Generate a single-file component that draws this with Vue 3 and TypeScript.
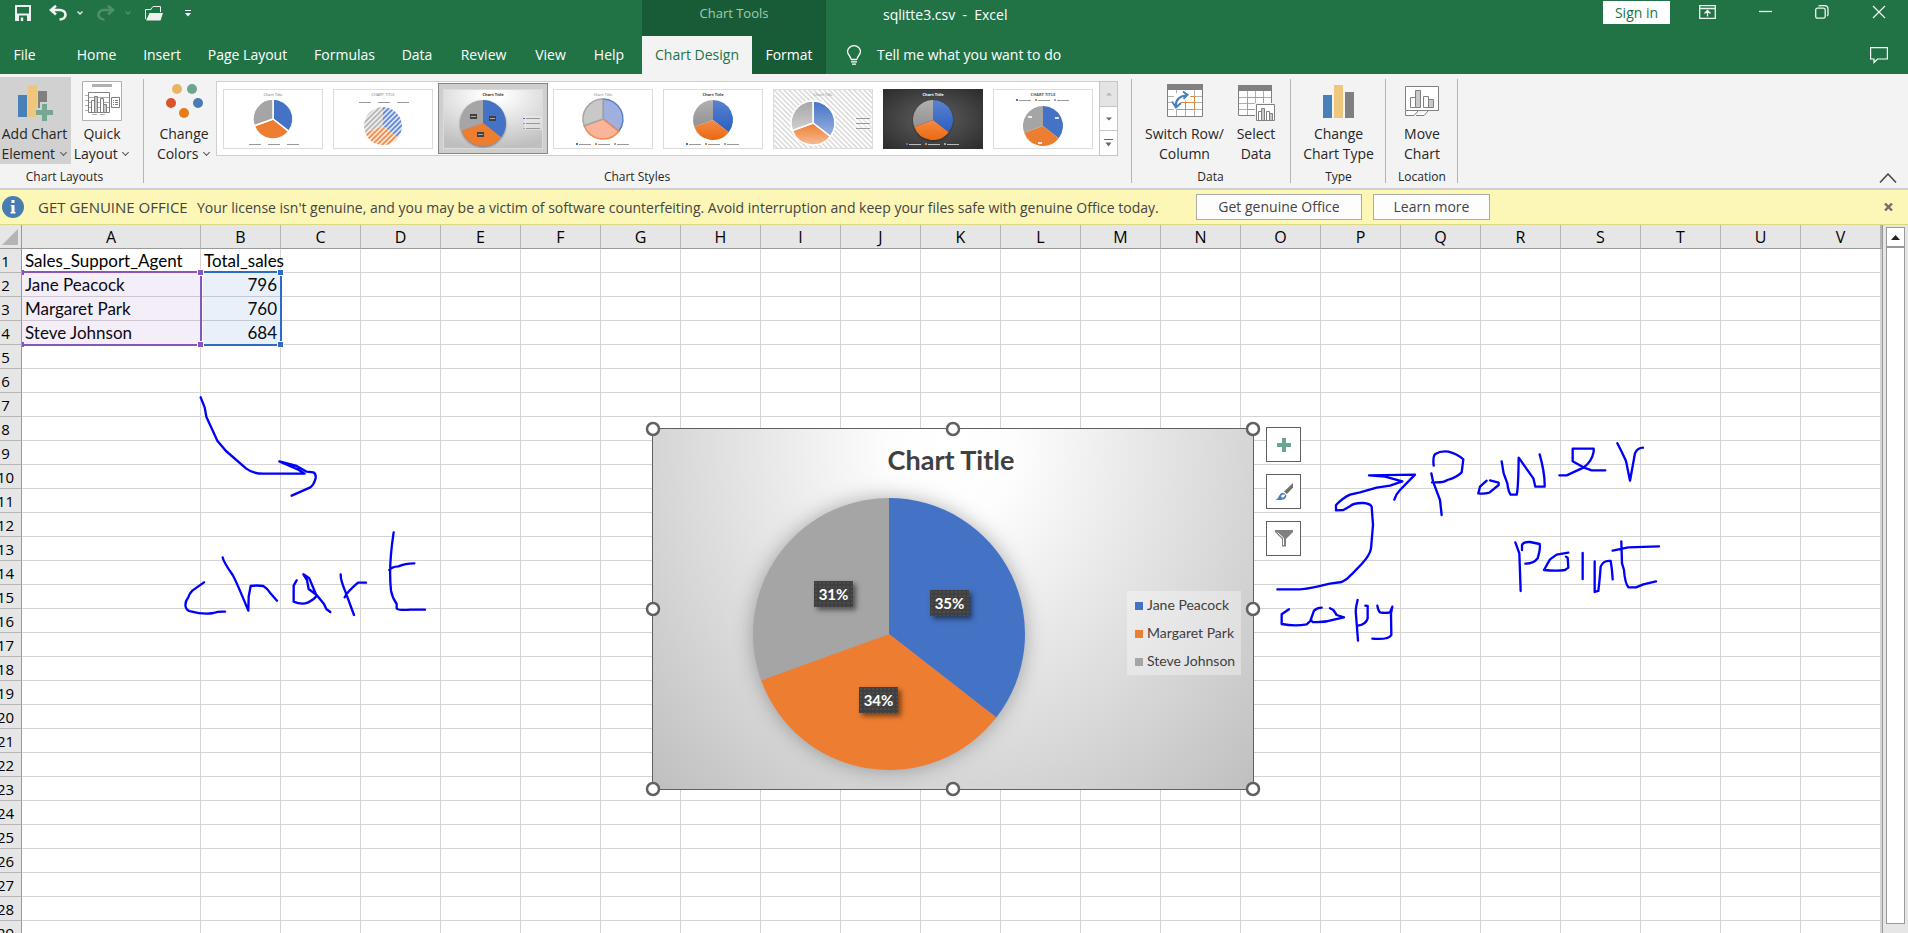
<script setup lang="ts">
interface Thumb {
  id: number
  bg: 'white' | 'radial' | 'dark' | 'hatch'
  title: string
  titleX: number
  titleFill: string
  titleBold: boolean
  cx: number
  cy: number
  r: number
  fills: [string, string, string]
  strokes?: [string, string, string]
  gap?: string
  legend: 'bottom' | 'top' | 'right'
  legendY: number
  colored: boolean
  labels?: 'dark' | 'light'
}

interface Slice {
  name: string
  value: number
  percent: string
  color: string
}

const slices: Slice[] = [
  { name: 'Jane Peacock', value: 796, percent: '35%', color: '#4472c4' },
  { name: 'Margaret Park', value: 760, percent: '34%', color: '#ed7d31' },
  { name: 'Steve Johnson', value: 684, percent: '31%', color: '#a5a5a5' },
]

function sectors(cx: number, cy: number, r: number): string[] {
  const total = slices.reduce((sum, s) => sum + s.value, 0)
  let angle = 0
  return slices.map((s) => {
    const next = angle + (s.value / total) * Math.PI * 2
    const x1 = cx + r * Math.sin(angle)
    const y1 = cy - r * Math.cos(angle)
    const x2 = cx + r * Math.sin(next)
    const y2 = cy - r * Math.cos(next)
    angle = next
    return `M${cx} ${cy}L${x1} ${y1}A${r} ${r} 0 0 1 ${x2} ${y2}Z`
  })
}

const pie = sectors(236, 205, 136)
const solid: [string, string, string] = ['#4472c4', '#ed7d31', '#a5a5a5']
const glossy: [string, string, string] = ['url(#gBlue)', 'url(#gOrange)', 'url(#gGrey)']

const thumbs: Thumb[] = [
  { id: 1, bg: 'white', title: 'Chart Title', titleX: 50, titleFill: '#666', titleBold: false, cx: 50, cy: 30, r: 20, fills: solid, gap: '#fff', legend: 'bottom', legendY: 55, colored: false },
  { id: 2, bg: 'white', title: 'CHART TITLE', titleX: 50, titleFill: '#777', titleBold: false, cx: 50, cy: 37, r: 19, fills: ['url(#hBlue)', 'url(#hOrange)', 'url(#hGrey)'], legend: 'top', legendY: 13, colored: false },
  { id: 3, bg: 'radial', title: 'Chart Title', titleX: 50, titleFill: '#333', titleBold: true, cx: 40, cy: 34, r: 23, fills: solid, legend: 'right', legendY: 29, colored: true, labels: 'dark' },
  { id: 4, bg: 'white', title: 'Chart Title', titleX: 50, titleFill: '#777', titleBold: false, cx: 50, cy: 30, r: 20, fills: ['#9fb0de', '#f9b49a', '#c8c8c8'], strokes: ['#5b7fce', '#f0894d', '#a5a5a5'], legend: 'bottom', legendY: 55, colored: true },
  { id: 5, bg: 'white', title: 'Chart Title', titleX: 50, titleFill: '#33405a', titleBold: true, cx: 50, cy: 31, r: 20, fills: glossy, legend: 'bottom', legendY: 55, colored: true },
  { id: 6, bg: 'hatch', title: 'Chart Title', titleX: 50, titleFill: '#888', titleBold: false, cx: 40, cy: 34, r: 22, fills: ['url(#fBlue)', 'url(#fOrange)', 'url(#fGrey)'], gap: '#fff', legend: 'right', legendY: 29, colored: false },
  { id: 7, bg: 'dark', title: 'Chart Title', titleX: 50, titleFill: '#fff', titleBold: true, cx: 50, cy: 31, r: 20, fills: glossy, legend: 'bottom', legendY: 55, colored: true },
  { id: 8, bg: 'white', title: 'CHART TITLE', titleX: 50, titleFill: '#555', titleBold: true, cx: 50, cy: 37, r: 20, fills: solid, legend: 'top', legendY: 11, colored: true, labels: 'light' },
]

function thumbBg(t: Thumb): string {
  if (t.bg === 'radial') return 'url(#bgRadial)'
  if (t.bg === 'dark') return 'url(#bgDark)'
  if (t.bg === 'hatch') return 'url(#bgHatch)'
  return '#fff'
}

const tabs = ['File', 'Home', 'Insert', 'Page Layout', 'Formulas', 'Data', 'Review', 'View', 'Help']
const columns = 'ABCDEFGHIJKLMNOPQRSTUV'.split('')
const cells: Record<string, string> = {
  A1: 'Sales_Support_Agent', B1: 'Total_sales',
  A2: 'Jane Peacock', B2: '796',
  A3: 'Margaret Park', B3: '760',
  A4: 'Steve Johnson', B4: '684',
}
const isNumber = (v?: string) => !!v && /^\d+$/.test(v)

const handles = [
  [0, 0], [300, 0], [600, 0],
  [0, 180], [600, 180],
  [0, 360], [300, 360], [600, 360],
]
</script>

<template>
  <div class="app">
    <header class="titlebar">
      <div class="left">
        <div class="qat">
          <button class="icon save" aria-label="Save">
            <svg width="16" height="16" viewBox="0 0 16 16"><path fill="#f0f0f0" fill-rule="evenodd" d="M0 0h16v16H0zM2 2v6.500h12V2zM4 10.500V16h1.800v-3.500h2.400V16H12v-5.500z" /></svg>
          </button>
          <button class="icon undo" aria-label="Undo">
            <svg width="18" height="16" viewBox="0 0 18 16" fill="none" stroke="#f4f4f4" stroke-width="2.600"><path d="M7 .8 2 5l5 4.400M2.500 5H11c3 0 5.500 1.800 5.500 4.800S14 14.500 10.500 14.500" /></svg>
          </button>
          <button class="icon caret" aria-label="Undo history">
            <svg width="6" height="4" viewBox="0 0 6 4" fill="none" stroke="#e8f0eb" stroke-width="1.300"><path d="M.5.5 3 3 5.500.5" /></svg>
          </button>
          <button class="icon redo" aria-label="Redo">
            <svg width="18" height="16" viewBox="0 0 18 16" fill="none" stroke="#4f9069" stroke-width="2.600"><path d="M11 .8 16 5l-5 4.400M15.500 5H7C4 5 1.500 6.800 1.500 9.800S4 14.500 7.500 14.500" /></svg>
          </button>
          <button class="icon caret" aria-label="Redo history">
            <svg width="6" height="4" viewBox="0 0 6 4" fill="none" stroke="#4f9069" stroke-width="1.300"><path d="M.5.5 3 3 5.500.5" /></svg>
          </button>
          <button class="icon open" aria-label="Open">
            <svg width="18" height="15" viewBox="0 0 18 15"><path fill="none" stroke="#f0f0f0" d="M.5 13V3.500h5.500V3l2-2.500h7.500V6" /><path fill="#f0f0f0" d="M1 14.500 4.500 7h13.500l-2.500 7.500z" /></svg>
          </button>
          <button class="icon more" aria-label="Customize Quick Access Toolbar">
            <svg width="6" height="7" viewBox="0 0 6 7"><path fill="#fff" d="M0 0h6v1H0zM0 3h6L3 6.500z" /></svg>
          </button>
        </div>
        <nav class="tabs">
          <button v-for="tab in tabs" :key="tab" class="tab">{{ tab }}</button>
        </nav>
      </div>
      <div class="context">
        <div class="context-title">Chart Tools</div>
        <div class="context-tabs">
          <button class="tab active">Chart Design</button>
          <button class="tab">Format</button>
        </div>
      </div>
      <div class="right">
        <div class="window-row">
          <div class="doc-title">sqlitte3.csv&nbsp; -&nbsp; Excel</div>
          <div class="window-controls">
            <button class="signin">Sign in</button>
            <button class="icon" aria-label="Ribbon Display Options">
              <svg width="17" height="14" viewBox="0 0 17 14" fill="none" stroke="#eef5f0" stroke-width="1.300"><path d="M.7.7h15.600v12.600H.7zM.7 3.500h15.600M8.500 11.500V6M5.500 8.500l3-3 3 3" /></svg>
            </button>
            <button class="icon" aria-label="Minimize">
              <svg width="13" height="14" viewBox="0 0 13 14"><path stroke="#eef5f0" stroke-width="1.300" d="M0 6.500h13" /></svg>
            </button>
            <button class="icon" aria-label="Restore Down">
              <svg width="14" height="14" viewBox="0 0 14 14" fill="none" stroke="#eef5f0" stroke-width="1.300"><rect x=".7" y="3.200" width="9.500" height="10" rx="1.800" /><path d="M3.500 1.200Q4.500.7 5.500.7h4Q13 .7 13 4.200v5q0 1-.7 1.800" /></svg>
            </button>
            <button class="icon" aria-label="Close">
              <svg width="14" height="14" viewBox="0 0 14 14"><path stroke="#eef5f0" stroke-width="1.300" d="m1 1 12 12M13 1 1 13" /></svg>
            </button>
          </div>
        </div>
        <div class="tell-row">
          <button class="tell">
            <svg width="16" height="20" viewBox="0 0 16 20" fill="none" stroke="#fff" stroke-width="1.300"><path d="M5 14.500C5 11 1.500 10 1.500 6.500a6.500 5.800 0 0 1 13 0C14.500 10 11 11 11 14.500M5 14.500h6M5 16.800h6M6 19.200h4" /></svg>
            <span>Tell me what you want to do</span>
          </button>
          <button class="icon comment" aria-label="Comments">
            <svg width="18" height="17" viewBox="0 0 18 17" fill="none" stroke="#fff" stroke-width="1.200"><path d="M.6.6h16.800v11.400H7.500L4 15.500V12H.6z" /></svg>
          </button>
        </div>
      </div>
    </header>

    <section class="ribbon">
      <div class="group layouts">
        <div class="group-body">
          <button class="big pressed">
            <svg width="36" height="40" viewBox="0 0 36 40"><path fill="#4a80b8" d="M1 14h9v22H1z" /><path fill="#eec77c" d="M11 4h9v32h-9z" /><path fill="#808080" d="M21 10h9v18h-9z" /><path fill="#d1d1d1" d="M23 21h9v5h5v8h-5v6h-7v-5h-6v-8h4z" /><path fill="#74a892" d="M25 23h5v6h6v5h-6v6h-5v-6h-6v-5h6z" /></svg>
            <span>Add Chart</span>
            <span>Element <i class="chev"></i></span>
          </button>
          <button class="big quick">
            <svg width="40" height="40" viewBox="0 0 40 40" fill="none"><path fill="#fff" stroke="#b0b0b0" d="M.5.500h39v39H.5z" /><path fill="#b0b0b0" d="M10 3h20v3H10z" /><path stroke="#b0b0b0" d="M3 14.500h3M3 19.500h3M3 24.500h3M3 29.500h3M10 33.500h5M18 33.500h5M7 16.500h20M7 21.500h20M7 26.500h20" /><path stroke="#808080" d="M6.500 11.500h21v20h-21z" /><path fill="#fff" stroke="#808080" d="M9.500 19.500h3v12h-3zM18.500 17.500h3v14h-3z" /><path fill="#c8c8c8" stroke="#808080" d="M12.500 15.500h3v16h-3zM21.500 23.500h3v8h-3z" /><path fill="#fff" stroke="#808080" d="M29.500 16.500h8v10h-8z" /><path stroke="#808080" d="M31 19.500h1M33 19.500h3M31 21.500h1M33 21.500h3M31 23.500h1M33 23.500h3" /></svg>
            <span>Quick</span>
            <span>Layout <i class="chev"></i></span>
          </button>
        </div>
        <div class="group-label">Chart Layouts</div>
      </div>

      <div class="group styles">
        <div class="group-body">
          <button class="big colors">
            <svg width="40" height="40" viewBox="0 0 40 40"><circle cx="13" cy="8" r="5" fill="#eab563" /><circle cx="28" cy="8" r="5" fill="#6aa590" /><circle cx="7" cy="22" r="5" fill="#d9532f" /><circle cx="34" cy="22" r="5" fill="#487db4" /><circle cx="20" cy="32" r="5" fill="#e67a1c" /></svg>
            <span>Change</span>
            <span>Colors <i class="chev"></i></span>
          </button>
          <div class="gallery">
            <button v-for="t in thumbs" :key="t.id" class="thumb" :class="{ selected: t.id === 3 }" :aria-label="'Style ' + t.id">
              <svg width="100" height="60" viewBox="0 0 100 60">
                <rect x="0.5" y="0.5" width="99" height="59" :fill="thumbBg(t)" :stroke="t.bg === 'dark' ? '#333' : '#dcdcdc'" />
                <text :x="t.titleX" y="7" text-anchor="middle" class="thumb-title" :fill="t.titleFill" :font-weight="t.titleBold ? 700 : 400">{{ t.title }}</text>
                <g :stroke="t.gap || 'none'" stroke-width="1.500" :class="{ glow: t.bg === 'radial' || t.bg === 'dark' }">
                  <path v-for="(d, i) in sectors(t.cx, t.cy, t.r)" :key="i" :d="d" :fill="t.fills[i]" :stroke="t.strokes ? t.strokes[i] : undefined" />
                </g>
                <g v-if="t.labels === 'dark'" fill="#404040"><path d="M27 25h7v5h-7zM46 27h7v5h-7zM34 43h7v5h-7z" /><path fill="#aaa" d="M28 27h5v1h-5zM47 29h5v1h-5zM35 45h5v1h-5z" /></g>
                <g v-if="t.labels === 'light'" fill="#fff" opacity=".8"><path d="M35 27h4v2h-4zM62 28h4v2h-4zM45 53h4v2h-4z" /></g>
                <g v-if="t.legend !== 'right'" :fill="t.bg === 'dark' ? '#bbb' : '#999'">
                  <rect v-for="i in 3" :key="i" :x="7 + i * 19" :y="t.legendY" width="12" height="1" />
                  <template v-if="t.colored"><rect v-for="(c, i) in solid" :key="c" :x="23 + i * 19" :y="t.legendY - 1" width="2" height="2" :fill="c" /></template>
                </g>
                <g v-else fill="#999">
                  <rect x="81" y="27" width="18" height="14" fill="#fff" fill-opacity=".3" />
                  <rect v-for="i in 3" :key="i" x="83" :y="t.legendY - 5 + i * 5" width="14" height="1" />
                  <template v-if="t.colored"><rect v-for="(c, i) in solid" :key="c" x="80" :y="t.legendY + i * 5" width="2" height="1" :fill="c" /></template>
                </g>
              </svg>
            </button>
            <div class="gallery-scroll">
              <button class="off" aria-label="Previous row"><svg width="6" height="4" viewBox="0 0 6 4"><path fill="#b5b5b5" d="M0 3.500h6L3 .5z" /></svg></button>
              <button aria-label="Next row"><svg width="6" height="4" viewBox="0 0 6 4"><path fill="#666" d="M0 .5h6L3 3.500z" /></svg></button>
              <button aria-label="More styles"><svg width="9" height="8" viewBox="0 0 9 8"><path fill="#666" d="M0 0h9v1H0zM1.500 3.500h6l-3 4z" /></svg></button>
            </div>
          </div>
        </div>
        <div class="group-label styles-label">Chart Styles</div>
      </div>

      <div class="group data">
        <div class="group-body">
          <button class="big switch">
            <svg width="38" height="40" viewBox="0 0 38 40" fill="none"><path fill="#fff" d="M1 4h36v31H1z" /><path stroke="#b0b0b0" d="M1 15.500h36M1 21.500h36M1 28.500h36M10.500 9v26M19.500 9v26M28.500 9v26" /><path stroke="#808080" d="M1.500 5v30.500h35V5" /><path fill="#808080" d="M1 3h36v6H1z" /><path stroke="#e58a3c" d="M10.500 15.500h18v13h-18zM10.500 21.500h18M19.500 15.500v13" /><path fill="#fff" d="M6 20l3-7 5-3 8-.5 3 5-4 5-6 1-1 5-5 4-5-5z" /><path stroke="#4a80b8" stroke-width="2" d="M10 25q-1-9 11-11M17 10.500l4.500 3.300-4 4M6 20.500l4 6 5-4.500" /></svg>
            <span>Switch Row/</span><span>Column</span>
          </button>
          <button class="big select">
            <svg width="38" height="40" viewBox="0 0 38 40" fill="none"><path fill="#fff" d="M1 4h33v31H1z" /><path stroke="#b0b0b0" d="M1 16.500h33M1 22.500h33M1 28.500h33M10.500 10v24M18.500 10v24M26.500 10v24" /><path stroke="#808080" d="M1.500 5v29.500h33V5" /><path fill="#808080" d="M1 4h34v6H1z" /><path stroke="#e58a3c" d="M10.500 16.500h16v12h-16z" /><path fill="#f3f3f3" d="M18 22h20v18H18z" /><path fill="#fff" stroke="#808080" d="M19.500 23.500h18v16h-18zM21.500 30.500h3v9h-3zM29.500 30.500h3v9h-3z" /><path fill="#c8c8c8" stroke="#808080" d="M24.500 27.500h3v12h-3zM32.500 32.500h3v7h-3z" /></svg>
            <span>Select</span><span>Data</span>
          </button>
        </div>
        <div class="group-label">Data</div>
      </div>

      <div class="group type">
        <div class="group-body">
          <button class="big">
            <svg width="32" height="40" viewBox="0 0 32 40"><path fill="#4a80b8" d="M0 14h9v23H0z" /><path fill="#eec77c" d="M11 4h9v33h-9z" /><path fill="#808080" d="M22 11h9v26h-9z" /></svg>
            <span>Change</span><span>Chart Type</span>
          </button>
        </div>
        <div class="group-label">Type</div>
      </div>

      <div class="group location">
        <div class="group-body">
          <button class="big">
            <svg width="34" height="40" viewBox="0 0 34 40" fill="none" stroke="#808080"><path fill="#fff" d="M.5 5.500h33v24H.5zM5.500 16.500h5v10h-5zM18.500 15.500h5v11h-5z" /><path fill="#c8c8c8" d="M10.500 9.500h5v17h-5zM23.500 18.500h5v8h-5z" /><path fill="#fff" d="M.5 30v4.500h8.500l4-4.500M11 34.500h8l4-4.500" /></svg>
            <span>Move</span><span>Chart</span>
          </button>
        </div>
        <div class="group-label">Location</div>
      </div>

      <button class="icon collapse" aria-label="Collapse the Ribbon">
        <svg width="18" height="10" viewBox="0 0 18 10" fill="none" stroke="#444" stroke-width="1.500"><path d="m1 9.500 8-8.500 8 8.500" /></svg>
      </button>
    </section>

    <section class="notice">
      <svg width="22" height="22" viewBox="0 0 22 22"><circle cx="11" cy="11" r="11" fill="#487db4" /><path fill="#fff" d="M9.500 4h3v3h-3zM9 9h3.500v8H9.500v-7H8.500zM8.500 16h5v1.500h-5z" /></svg>
      <span class="notice-title">GET GENUINE OFFICE</span>
      <span class="notice-text">Your license isn't genuine, and you may be a victim of software counterfeiting. Avoid interruption and keep your files safe with genuine Office today.</span>
      <button class="notice-btn genuine">Get genuine Office</button>
      <button class="notice-btn learn">Learn more</button>
      <button class="icon notice-close" aria-label="Close message">
        <svg width="9" height="8" viewBox="0 0 9 8"><path stroke="#707070" stroke-width="2.400" d="m1 .5 7 7M8 .5l-7 7" /></svg>
      </button>
    </section>

    <main class="sheet">
      <div class="grid">
        <table>
          <colgroup>
            <col class="c-row" /><col class="c-a" /><col v-for="n in 21" :key="n" class="c-std" /><col />
          </colgroup>
          <thead>
            <tr>
              <th class="corner" aria-label="Select all"><svg width="16" height="16" viewBox="0 0 16 16"><path fill="#b4b4b4" d="M16 0v16H0z" /></svg></th>
              <th v-for="c in columns" :key="c" scope="col">{{ c }}</th>
              <th></th>
            </tr>
          </thead>
          <tbody>
            <tr v-for="r in 29" :key="r">
              <th scope="row">{{ r }}</th>
              <td v-for="c in columns" :key="c" :class="{ num: isNumber(cells[c + r]) }">{{ cells[c + r] }}</td>
              <td></td>
            </tr>
          </tbody>
        </table>

        <svg class="ranges" width="290" height="130" viewBox="0 225 290 130">
          <path fill="#8656bb" fill-opacity=".1" d="M22 273h179v71H22z" />
          <path fill="#2e6bc8" fill-opacity=".1" d="M203 273h78v71h-78z" />
          <path fill="none" stroke="#2e6bc8" stroke-width="2" d="M201 272h80v73h-80" />
          <path fill="none" stroke="#8656bb" stroke-width="2" d="M22 272h179v73H22" />
          <g fill="#8656bb" stroke="#fff"><path d="M197.500 269.500h6v6h-6zM197.500 341.500h6v6h-6z" /></g>
          <g fill="#2e6bc8" stroke="#fff"><path d="M277.500 269.500h6v6h-6zM277.500 341.500h6v6h-6z" /></g>
          <path fill="#8656bb" d="M22 270h2v5h-2zM22 342h2v5h-2z" />
        </svg>

        <figure class="chart">
          <figcaption>Chart Title</figcaption>
          <svg class="pie" width="600" height="360" viewBox="0 0 600 360">
            <path v-for="(d, i) in pie" :key="i" :d="d" :fill="slices[i].color" />
          </svg>
          <span class="pct p1">{{ slices[0].percent }}</span>
          <span class="pct p2">{{ slices[1].percent }}</span>
          <span class="pct p3">{{ slices[2].percent }}</span>
          <ul class="legend">
            <li v-for="s in slices" :key="s.name"><i :style="{ background: s.color }"></i>{{ s.name }}</li>
          </ul>
          <svg class="handles" width="620" height="380" viewBox="-10 -10 620 380">
            <circle v-for="(h, i) in handles" :key="i" :cx="h[0]" :cy="h[1]" r="6" fill="#fff" stroke="#606060" stroke-width="2.500" />
          </svg>
          <div class="chart-tools">
            <button aria-label="Chart Elements"><svg width="14" height="14" viewBox="0 0 14 14"><path fill="#6aa590" d="M5 0h4v5h5v4H9v5H5V9H0V5h5z" /></svg></button>
            <button aria-label="Chart Styles"><svg width="18" height="18" viewBox="0 0 18 18"><path fill="#707070" d="M18 0v4.500l-6 6.500-3-2.500z" /><path fill="#4a80b8" d="M0 17q3-1 4-4 2-4 5-3l2.500 2.500Q11 17 5 17z" /><path fill="#fff" d="M6 13q1-2 3-1.500t0 2.500-3-1z" /></svg></button>
            <button aria-label="Chart Filters"><svg width="18" height="17" viewBox="0 0 18 17"><path fill="#808080" d="M0 0h18v2l-7 7v7.500H7V9L0 2z" /><path stroke="#fff" fill="none" d="M2.500 2.500 8.500 8v7" /></svg></button>
          </div>
        </figure>

        <svg class="ink" width="1886" height="708" viewBox="0 225 1886 708" aria-hidden="true">
          <g transform="translate(0 220) scale(.33333)">
            <path d="M602 532 614 562 619 590 652 662 678 693 738 745Q758 761 790 761H914L893 748 838 724 890 738 920 755 940 757Q948 760 947 773 943 793 931 802L875 827" />
            <path d="M612 1087 577 1112Q567 1122 565 1132 554 1146 557 1160 560 1172 572 1174 612 1185 640 1179 655 1174 675 1175M668 1012Q670 1025 698 1065 708 1082 745 1172L746 1130 752 1098Q770 1095 790 1098 800 1104 810 1118L831 1142M890 1081 881 1097V1145Q905 1156 925 1147 942 1139 950 1128L928 1075 910 1063 921 1080 926 1107 950 1125 972 1152 979 1167 991 1176M1022 1063Q1022 1082 1035 1112L1062 1185M1034 1132Q1040 1117 1074 1088H1098M1181 937Q1165 1040 1173 1112 1177 1134 1190 1152V1165Q1195 1172 1232 1169L1275 1169M1168 1050Q1175 1040 1195 1039 1215 1030 1243 1030" />
          </g>
          <g transform="translate(1240 410) scale(.33333)">
            <path d="M112 538H180Q200 538 270 521L305 516Q323 508 335 493L365 462Q390 435 393 415L399 345 395 290Q390 280 370 279 340 278 330 289L310 300 288 301V285Q310 263 330 254L360 247 410 233 450 227 487 214 435 200 387 196 525 194 480 240Q468 252 463 269" />
            <path d="M581 167Q578 138 586 132 602 122 625 125 650 131 670 148L665 187Q650 202 622 210 610 219 576 217M574 190 579 214 600 270 605 315M740 212 720 230 715 250Q730 253 748 248L776 225V218L750 211M785 154 791 190 802 220Q805 245 812 254H830Q835 235 836 143L880 205 886 230H914Q915 190 899 133M958 196H980L1030 173Q1056 155 1061 125V116H998V154L1030 172 1055 181H1096M1132 100 1145 125 1158 153 1170 212 1185 130Q1193 113 1209 113" />
            <path d="M826 397 838 430 842 543M846 420 846 405Q850 395 870 396L899 402Q902 415 893 445 880 462 856 461M985 428 950 434 930 448 912 480Q950 484 975 480L985 473 983 443 978 440M1028 429V507M1064 454V546L1075 543Q1080 500 1082 470 1090 450 1112 453 1116 475 1118 508M1118 422 1165 412 1257 409M1144 394 1146 460 1152 480Q1155 520 1165 532H1188L1210 523 1248 514" />
            <path d="M147 598 125 613V642Q165 650 200 643L214 630M245 593Q232 593 222 602L212 630 218 636Q255 638 285 628L312 622 290 615 280 600 270 595M353 570Q345 600 348 615L354 692M376 587 383 588V625Q378 643 354 647M412 587Q414 602 420 607 435 610 450 607L457 590 453 610 454 675Q446 690 397 686" />
          </g>
        </svg>
      </div>
      <div class="scrollbar">
        <button class="up" aria-label="Scroll up"><svg width="9" height="5" viewBox="0 0 9 5"><path fill="#222" d="M0 5h9L4.500 0z" /></svg></button>
        <div class="thumb-bar"></div>
      </div>
    </main>

    <svg class="defs" width="0" height="0" aria-hidden="true">
      <defs>
        <radialGradient id="bgRadial" cx=".5" cy=".1" r=".9"><stop offset=".1" stop-color="#fff" /><stop offset="1" stop-color="#bfbfbf" /></radialGradient>
        <radialGradient id="bgDark" cx=".5" cy=".5" r=".7"><stop offset="0" stop-color="#606060" /><stop offset="1" stop-color="#2c2c2c" /></radialGradient>
        <pattern id="bgHatch" width="5" height="5" patternUnits="userSpaceOnUse"><path fill="#fff" d="M0 0h5v5H0z" /><path stroke="#dcdcdc" stroke-width="1.600" d="m-1-1 7 7M-1 4l2 2M4-1l2 2" /></pattern>
        <pattern id="hBlue" width="5" height="5" patternUnits="userSpaceOnUse"><path fill="#dbe4f5" d="M0 0h5v5H0z" /><path stroke="#5f87d2" stroke-width="1.600" d="m-1 6 7-7M-1 1l2-2M4 6l2-2" /></pattern>
        <pattern id="hOrange" width="5" height="5" patternUnits="userSpaceOnUse"><path fill="#fce6d8" d="M0 0h5v5H0z" /><path stroke="#f08a45" stroke-width="1.600" d="m-1 6 7-7M-1 1l2-2M4 6l2-2" /></pattern>
        <pattern id="hGrey" width="5" height="5" patternUnits="userSpaceOnUse"><path fill="#eee" d="M0 0h5v5H0z" /><path stroke="#b4b4b4" stroke-width="1.600" d="m-1 6 7-7M-1 1l2-2M4 6l2-2" /></pattern>
        <linearGradient id="gBlue" x2="0" y2="1"><stop offset="0" stop-color="#5a83d0" /><stop offset="1" stop-color="#2a5ec0" /></linearGradient>
        <linearGradient id="gOrange" x2="0" y2="1"><stop offset="0" stop-color="#f58a45" /><stop offset="1" stop-color="#ea6a10" /></linearGradient>
        <linearGradient id="gGrey" x2="0" y2="1"><stop offset="0" stop-color="#b0b0b0" /><stop offset="1" stop-color="#929292" /></linearGradient>
        <linearGradient id="fBlue" x2="0" y2="1"><stop offset="0" stop-color="#4472c4" /><stop offset="1" stop-color="#9ab2e2" /></linearGradient>
        <linearGradient id="fOrange" x2="0" y2="1"><stop offset="0" stop-color="#ed7d31" /><stop offset="1" stop-color="#f6bd96" /></linearGradient>
        <linearGradient id="fGrey" x2="0" y2="1"><stop offset="0" stop-color="#a5a5a5" /><stop offset="1" stop-color="#d0d0d0" /></linearGradient>
      </defs>
    </svg>
  </div>
</template>

<style>
body { margin: 0; }
</style>

<style scoped>
* { box-sizing: border-box; }
.app {
  display: flex;
  flex-direction: column;
  height: 100vh;
  overflow: hidden;
  position: relative;
  font: 14px/20px "Open Sans", "Noto Sans", sans-serif;
  color: #262626;
  background: #e6e6e6;
}
button { font: inherit; color: inherit; background: none; border: 0; padding: 0; margin: 0; white-space: nowrap; }
svg { display: block; flex: none; }
.defs { position: absolute; }
.icon { display: flex; align-items: center; justify-content: center; }

.titlebar { display: grid; grid-template-columns: 642px 184px 1fr; height: 74px; background: #217346; color: #fff; flex: none; }
.left, .right, .context { display: flex; flex-direction: column; }
.qat { display: flex; align-items: center; height: 36px; padding: 0 0 10px 15px; }
.undo { margin-left: 18px; }
.redo { margin-left: 14px; }
.qat .caret { margin-left: 10px; }
.open { margin-left: 14px; }
.more { margin-left: 22px; }
.tabs { display: grid; grid-template-columns: 49px 81px 64px 107px 87px 58px 75px 59px 58px; height: 38px; }
.tabs .tab:nth-child(2) { padding-left: 14px; }
.context { background: #185c37; }
.context-title { height: 36px; line-height: 26px; text-align: center; color: #a0cdb2; font-size: 13px; }
.context-tabs { display: grid; grid-template-columns: 110px 74px; height: 38px; }
.active { background: #f3f3f3; color: #217346; }
.window-row { display: flex; justify-content: space-between; height: 36px; }
.doc-title { padding-left: 57px; line-height: 30px; }
.window-controls { display: flex; align-items: flex-start; padding: 1px 22px 0 0; }
.window-controls .icon { height: 22px; margin-left: 43px; }
.window-controls .icon:nth-child(2) { margin-left: 29px; }
.signin { background: #fff; color: #217346; width: 67px; height: 23px; line-height: 22px; }
.tell-row { display: flex; align-items: center; justify-content: space-between; height: 38px; padding: 0 20px; }
.tell { display: flex; align-items: center; gap: 15px; }

.ribbon { display: flex; height: 115px; background: #f3f3f3; border-bottom: 1px solid #d0d0d0; padding-top: 3px; flex: none; position: relative; }
.group { display: flex; flex-direction: column; position: relative; }
.group::after { content: ""; position: absolute; right: 0; top: 2px; height: 104px; width: 1px; background: #b5b5b5; }
.group-body { display: flex; height: 91px; }
.group-label { font-size: 12px; text-align: center; line-height: 22px; }
.big { display: flex; flex-direction: column; align-items: center; line-height: 20px; padding-top: 4px; height: 87px; }
.big svg { margin-bottom: 3px; }
.chev { display: inline-block; width: 5px; height: 5px; border: solid #555; border-width: 0 1px 1px 0; transform: rotate(45deg); margin: 0 2px 4px 2px; }
.layouts { width: 144px; }
.layouts .group-label { padding-right: 15px; }
.pressed { background: #d1d1d1; width: 71px; padding-right: 2px; }
.quick { width: 62px; }
.styles { width: 988px; }
.styles-label { padding-right: 2px; }
.colors { width: 72px; padding-left: 8px; }
.gallery { display: flex; height: 75px; margin-top: 4px; border: 1px solid #d0d0d0; background: #fff; padding-left: 1px; }
.thumb { width: 110px; padding: 4px; border: 1px solid transparent; height: 71px; margin-top: 1px; }
.selected { background: #d0cecc; border: 1px solid #858885; }
.thumb-title { font-family: "Open Sans", sans-serif; font-size: 4px; }
.thumb-title[font-weight="700"] { font-size: 4px; }
.glow { filter: drop-shadow(0 1px 1px rgba(0, 0, 0, .4)); }
.gallery-scroll { display: flex; flex-direction: column; width: 19px; margin: -1px -1px -1px 1px; }
.gallery-scroll button { flex: 1; display: flex; align-items: center; justify-content: center; border: 1px solid #c6c6c6; margin-bottom: -1px; background: #fff; }
.gallery-scroll button:last-child { margin-bottom: 0; }
.gallery-scroll .off { background: #e4e4e4; }
.data { width: 159px; }
.data .group-label { padding-right: 2px; }
.switch { width: 105px; }
.select { width: 38px; }
.type { width: 95px; }
.location { width: 72px; }
.type .group-body, .location .group-body { justify-content: center; }
.collapse { position: absolute; right: 11px; bottom: 5px; }

.notice { display: flex; align-items: center; height: 36px; padding-left: 2px; background: #fcf6b7; border: solid #dcd884; border-width: 1px 0; color: #444; flex: none; }
.notice-title { margin-left: 14px; width: 147px; font-size: 15px; line-height: 22px; white-space: nowrap; }
.notice-text { margin-left: 12px; width: 976px; line-height: 22px; padding-top: 1px; white-space: nowrap; }
.notice-btn { background: #fdfdfd; border: 1px solid #ababab; height: 26px; line-height: 24px; }
.genuine { width: 166px; margin-left: 23px; }
.learn { width: 117px; margin-left: 11px; }
.notice-close { margin: 0 15px 0 auto; }

.sheet { display: flex; flex: 1; min-height: 0; overflow: hidden; }
.grid { flex: 1; min-width: 0; position: relative; overflow: hidden; border-right: 1px solid #999; background: #fff; }
table { border-collapse: separate; border-spacing: 0; table-layout: fixed; width: calc(100% + 10px); margin-left: -10px; font-family: Lato, "Open Sans", sans-serif; font-size: 17px; line-height: 22px; color: #000; }
.c-row { width: 32px; }
.c-a { width: 179px; }
.c-std { width: 80px; }
th, td { height: 24px; padding: 1px 0 0; border: solid #d4d4d4; border-width: 0 1px 1px 0; }
th { background: #e6e6e6; font-weight: 400; font-family: "Open Sans", sans-serif; font-size: 16px; text-align: center; border-color: #b5b5b5; }
thead th { border-bottom-color: #999; }
th:first-child { border-right-color: #999; }
tbody th { font-size: 15px; }
.corner svg { margin-left: 12px; }
td { padding: 1px 3px 0; white-space: nowrap; overflow: visible; }
.num { text-align: right; }

.ranges, .ink { position: absolute; left: 0; top: 0; pointer-events: none; }
.ink path { fill: none; stroke: #0000fa; stroke-width: 7; stroke-linejoin: round; stroke-linecap: round; }

.chart { position: absolute; left: 652px; top: 203px; width: 602px; height: 362px; margin: 0; border: 1px solid #606060; background: radial-gradient(ellipse farthest-corner at 50% 5%, #fff 0, #fdfdfd 15%, #d9d9d9 65%, #bfbfbf 100%); font-family: Lato, "Open Sans", sans-serif; }
figcaption { text-align: center; font-size: 27px; line-height: 36px; font-weight: 700; color: #404040; padding: 13px 4px 0 0; }
.pie { position: absolute; left: 0; top: 0; filter: drop-shadow(0 0 10px rgba(0, 0, 0, .3)); }
.pct { position: absolute; width: 39px; height: 26px; line-height: 26px; text-align: center; background: radial-gradient(#4c4c4c 1px, #404040 1px) 0 0 / 4px 4px; color: #fff; font-size: 15px; font-weight: 700; box-shadow: 3px 3px 5px rgba(0, 0, 0, .5); }
.p1 { left: 277px; top: 161px; }
.p2 { left: 206px; top: 258px; }
.p3 { left: 161px; top: 152px; }
.legend { position: absolute; right: 12px; top: 162px; width: 114px; height: 84px; margin: 0; padding: 0 0 0 8px; list-style: none; background: rgba(255, 255, 255, .35); color: #404040; font-size: 14px; line-height: 28px; white-space: nowrap; }
.legend i { display: inline-block; width: 8px; height: 8px; margin-right: 4px; }
.handles { position: absolute; left: -10px; top: -10px; }
.chart-tools { position: absolute; left: 613px; top: -2px; display: flex; flex-direction: column; gap: 12px; }
.chart-tools button { width: 35px; height: 35px; border: 1px solid #606060; background: #fff; display: flex; align-items: center; justify-content: center; }

.scrollbar { width: 25px; background: #e6e6e6; padding: 2px 3px 9px; display: flex; flex-direction: column; }
.up { height: 20px; display: flex; align-items: center; justify-content: center; background: #fff; border: 1px solid #999; }
.thumb-bar { flex: 1; background: #fff; border: 1px solid #999; }
</style>
